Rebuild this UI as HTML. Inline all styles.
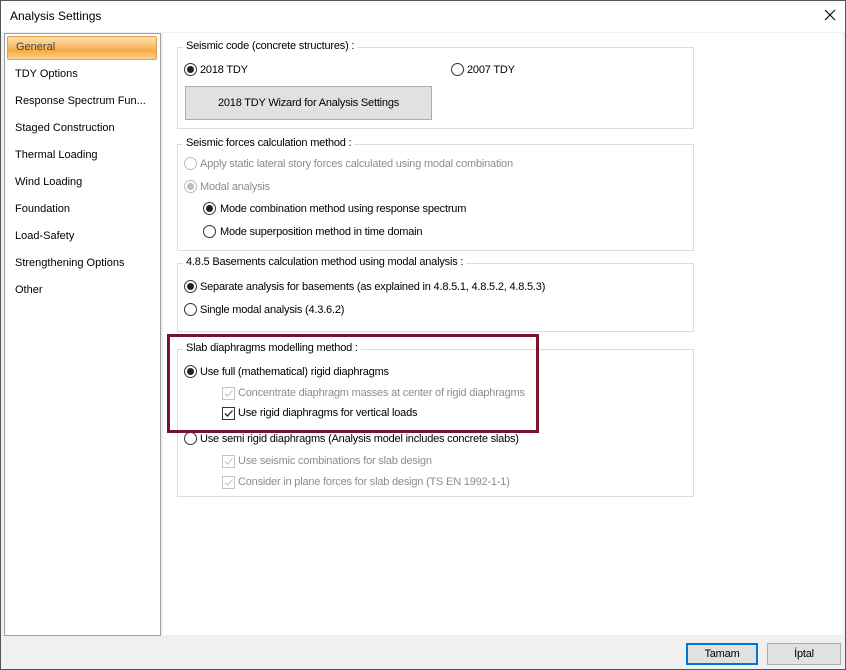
<!DOCTYPE html><html><head><style>
body{margin:0;width:846px;height:670px;overflow:hidden;font-family:"Liberation Sans",sans-serif;font-size:11px;letter-spacing:-0.2px;color:#000;background:#fff}
.a{position:absolute;white-space:nowrap}
.win{position:absolute;left:0;top:0;width:844px;height:668px;border:1px solid #555;background:#f0f0f0}
.g{position:absolute;border:1px solid #dcdcdc}
.lg{position:absolute;background:#fff;padding:0 3px;top:-8px;left:5px}
.r{position:absolute;border:1px solid #333;border-radius:50%;background:#fff;box-sizing:border-box;width:13px;height:13px}
.r.on::after{content:"";position:absolute;left:2px;top:2px;width:7px;height:7px;border-radius:50%;background:#222}
.r.dis{border-color:#bcbcbc}.r.dis.on::after{background:#bcbcbc}
.c{position:absolute;width:11px;height:11px;border:1px solid #333;background:#fff}
.c.dis{border-color:#c4c4c4}
.c svg{position:absolute;left:0;top:0}
.gray{color:#8d8d8d}
.li{position:absolute;left:14px;letter-spacing:0}
</style></head><body><div class="win">
<div class="a" style="left:0;top:0;width:844px;height:31px;background:#fff"></div>
<div class="a" style="left:9px;top:8px;font-size:12px;letter-spacing:0">Analysis Settings</div>
<svg class="a" style="left:823px;top:8px" width="12" height="12"><path d="M1 1L11 11M11 1L1 11" stroke="#000" stroke-width="1.1"/></svg>
<div class="a" style="left:3px;top:32px;width:155px;height:601px;background:#fff;border:1px solid #a0a0a0"></div>
<div class="a" style="left:6px;top:35px;width:148px;height:22px;border:1px solid #e0a050;border-radius:2px;background:linear-gradient(#fde0b0,#f8b860 50%,#f6a840 60%,#fbd090)"></div>
<div class="a" style="left:15px;top:40px;color:#444;letter-spacing:0">General</div>
<div class="li a" style="top:67px">TDY Options</div>
<div class="li a" style="top:94px">Response Spectrum Fun...</div>
<div class="li a" style="top:121px">Staged Construction</div>
<div class="li a" style="top:148px">Thermal Loading</div>
<div class="li a" style="top:175px">Wind Loading</div>
<div class="li a" style="top:202px">Foundation</div>
<div class="li a" style="top:229px">Load-Safety</div>
<div class="li a" style="top:256px">Strengthening Options</div>
<div class="li a" style="top:283px">Other</div>
<div class="a" style="left:162px;top:32px;width:680px;height:602px;background:#fff"></div>

<div class="g" style="left:176px;top:46px;width:515px;height:80px"><div class="lg">Seismic code (concrete structures) :</div></div>
<div class="r on" style="left:183px;top:62px"></div><div class="a" style="left:199px;top:63px">2018 TDY</div>
<div class="r" style="left:450px;top:62px"></div><div class="a" style="left:466px;top:63px">2007 TDY</div>
<div class="a" style="left:184px;top:85px;width:245px;height:32px;background:#e1e1e1;border:1px solid #adadad;text-align:center;line-height:32px">2018 TDY Wizard for Analysis Settings</div>

<div class="g" style="left:176px;top:143px;width:515px;height:105px"><div class="lg">Seismic forces calculation method :</div></div>
<div class="r dis" style="left:183px;top:156px"></div><div class="a gray" style="left:199px;top:157px">Apply static lateral story forces calculated using modal combination</div>
<div class="r dis on" style="left:183px;top:179px"></div><div class="a gray" style="left:199px;top:180px">Modal analysis</div>
<div class="r on" style="left:202px;top:201px"></div><div class="a" style="left:219px;top:202px">Mode combination method using response spectrum</div>
<div class="r" style="left:202px;top:224px"></div><div class="a" style="left:219px;top:225px">Mode superposition method in time domain</div>

<div class="g" style="left:176px;top:262px;width:515px;height:67px"><div class="lg">4.8.5 Basements calculation method using modal analysis :</div></div>
<div class="r on" style="left:183px;top:279px"></div><div class="a" style="left:199px;top:280px">Separate analysis for basements (as explained in 4.8.5.1, 4.8.5.2, 4.8.5.3)</div>
<div class="r" style="left:183px;top:302px"></div><div class="a" style="left:199px;top:303px">Single modal analysis (4.3.6.2)</div>

<div class="g" style="left:176px;top:348px;width:515px;height:146px"><div class="lg">Slab diaphragms modelling method :</div></div>
<div class="r on" style="left:183px;top:364px"></div><div class="a" style="left:199px;top:365px">Use full (mathematical) rigid diaphragms</div>
<div class="c dis" style="left:221px;top:386px"><svg width="11" height="11"><path d="M2 5.5L4.5 8L9.5 2.5" stroke="#c4c4c4" fill="none" stroke-width="1.2"/></svg></div><div class="a gray" style="left:237px;top:386px">Concentrate diaphragm masses at center of rigid diaphragms</div>
<div class="c" style="left:221px;top:406px"><svg width="11" height="11"><path d="M2 5.5L4.5 8L9.5 2.5" stroke="#222" fill="none" stroke-width="1.3"/></svg></div><div class="a" style="left:237px;top:406px">Use rigid diaphragms for vertical loads</div>
<div class="r" style="left:183px;top:431px"></div><div class="a" style="left:199px;top:432px">Use semi rigid diaphragms (Analysis model includes concrete slabs)</div>
<div class="c dis" style="left:221px;top:454px"><svg width="11" height="11"><path d="M2 5.5L4.5 8L9.5 2.5" stroke="#c4c4c4" fill="none" stroke-width="1.2"/></svg></div><div class="a gray" style="left:237px;top:454px">Use seismic combinations for slab design</div>
<div class="c dis" style="left:221px;top:475px"><svg width="11" height="11"><path d="M2 5.5L4.5 8L9.5 2.5" stroke="#c4c4c4" fill="none" stroke-width="1.2"/></svg></div><div class="a gray" style="left:237px;top:475px">Consider in plane forces for slab design (TS EN 1992-1-1)</div>
<div class="a" style="left:166px;top:333px;width:366px;height:93px;border:3px solid #7a1428"></div>

<div class="a" style="left:685px;top:642px;width:68px;height:18px;border:2px solid #0078d7;background:#e1e1e1;text-align:center;line-height:18px">Tamam</div>
<div class="a" style="left:766px;top:642px;width:72px;height:20px;border:1px solid #adadad;background:#e1e1e1;text-align:center;line-height:20px">İptal</div>
</div></body></html>
